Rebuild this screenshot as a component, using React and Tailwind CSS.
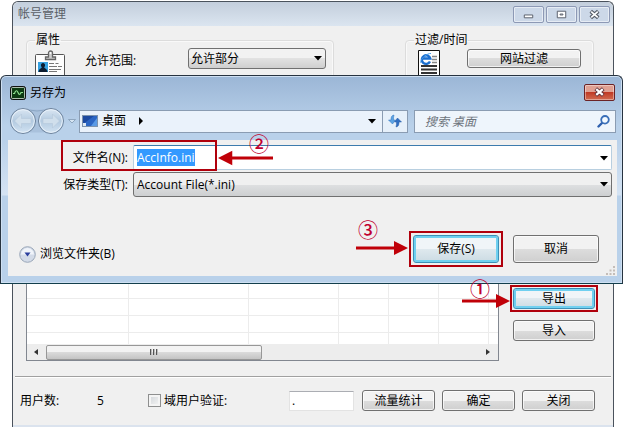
import clsx from 'clsx'

const COLUMNS = ['w-[102px]', 'w-[120px]', 'w-[90px]', 'w-[50px]', 'w-[50px]', 'w-[50px]', '']
const ROWS = 11

const FONT = "font-['Open_Sans','Noto_Sans_CJK_SC',sans-serif]"

function Button({ active, className, children }) {
  return (
    <button
      type="button"
      className={clsx(
        'flex items-center justify-center whitespace-nowrap rounded-[3px] border text-xs leading-4 text-black',
        active
          ? 'border-[#3c8fb5] bg-linear-to-b from-[#f0f5f8] from-50% via-[#dfe9ee] via-50% to-[#cbdbe3] inset-ring-2 inset-ring-[#6fd0f0]'
          : 'border-[#707070] bg-linear-to-b from-[#f2f2f2] from-50% via-[#dddddd] via-50% to-[#cfcfcf] inset-ring inset-ring-white/70',
        className
      )}
    >
      {children}
    </button>
  )
}

function Caret({ className }) {
  return (
    <svg viewBox="0 0 8 5" className={clsx('pointer-events-none h-[5px] w-2', className)} aria-hidden="true">
      <path d="M0 0h8L4 4.6z" fill="#000" />
    </svg>
  )
}

function Arrow({ left, className }) {
  return (
    <svg viewBox="0 0 54 16" className={clsx('pointer-events-none absolute z-20 h-4', className)} preserveAspectRatio={left ? 'xMinYMid slice' : 'xMaxYMid slice'} aria-hidden="true">
      {left ? (
        <path d="M0 8 14 1v5.5h40v3H14V15z" fill="#c00008" />
      ) : (
        <path d="M54 8 40 1v5.5H0v3h40V15z" fill="#c00008" />
      )}
    </svg>
  )
}

function Step({ className, children }) {
  return (
    <span className={clsx("pointer-events-none absolute z-20 font-['Noto_Sans_CJK_SC',sans-serif] text-[20px] leading-5 font-medium text-[#c00030]", className)}>
      {children}
    </span>
  )
}

function Frame({ className }) {
  return <span className={clsx('pointer-events-none absolute z-20 border-2 border-[#b0000c]', className)} />
}

function BadgeIcon() {
  return (
    <svg width="30" height="30" viewBox="0 0 30 30" aria-hidden="true">
      <rect x=".5" y="4.5" width="29" height="25" rx="1" fill="#fdfdfd" stroke="#555" />
      <path d="M10.500 9.500V7h3V3a2 2 0 0 1 4 0v4h3v2.500z" fill="#ccc" stroke="#666" strokeWidth="1.300" />
      <circle cx="15.500" cy="3" r="1" fill="#fff" />
      <rect x="3" y="12" width="10" height="10" fill="#35a0e0" />
      <path d="M8 13a2 2.300 0 0 1 1.200 4.200c.2 1.500 3 1 3.300 4.800h-9c.3-3.800 3.100-3.300 3.300-4.800A2 2.300 0 0 1 8 13z" fill="#0c1c30" />
      <path d="M14 13.500h5m1.500 0h3M14 16.500h8m1 0h4M14 19.500h12M14 21.500h8" stroke="#777" />
    </svg>
  )
}

function PageIcon() {
  return (
    <svg width="22" height="30" viewBox="0 0 22 30" aria-hidden="true">
      <path d="M.5.5h21v29H.5z" fill="#fff" stroke="#111" />
      <path d="M14 6.500h5M14 9.500h5M14 12.500h5" stroke="#888" strokeWidth="1.500" />
      <path d="M3 16h16M3 19.500h16M3 23h16M3 26.500h16" stroke="#333" strokeWidth="2" />
      <path d="M12 11.500a4.300 4.300 0 1 1 .3-3H5" fill="none" stroke="#1b6fd0" strokeWidth="2.400" />
      <path d="M3 13C1 11 8 3 13 3.500" fill="none" stroke="#4aa0ee" />
    </svg>
  )
}

function NavArrows() {
  return (
    <svg width="56" height="28" viewBox="0 0 56 28" aria-hidden="true">
      <defs>
        <linearGradient id="orb" x1="0" y1="0" x2="0" y2="1">
          <stop offset="0" stopColor="#dbe7f3" />
          <stop offset=".5" stopColor="#b3cae0" />
          <stop offset="1" stopColor="#d3e4f3" />
        </linearGradient>
      </defs>
      <path d="M14 2.500h28v23H14z" fill="#a9c1dc" />
      <path d="M16 2.500q12 3 24 0" fill="none" stroke="#8ba6c4" />
      <circle cx="14" cy="14" r="12.500" fill="url(#orb)" stroke="#6c829c" />
      <circle cx="42" cy="14" r="12.500" fill="url(#orb)" stroke="#6c829c" />
      <circle cx="14" cy="14" r="11.300" fill="none" stroke="#e8f1fa" />
      <circle cx="42" cy="14" r="11.300" fill="none" stroke="#e8f1fa" />
      <path d="m5.500 14 7-7v4.500H22v5h-9.500V21z" fill="#d0dfec" stroke="#b5c8da" strokeWidth=".6" />
      <path d="m50.500 14-7-7v4.500H34v5h9.500V21z" fill="#d0dfec" stroke="#b5c8da" strokeWidth=".6" />
    </svg>
  )
}

function ManagerWindow() {
  return (
    <main className="mt-px mr-[9px] ml-3 rounded-t-md border border-b-0 border-[#4a525c] bg-[#f0f0f0]">
      <header className="flex h-6 items-center justify-between rounded-t-md bg-linear-to-b from-[#c3cedc] to-[#dbe5f0] pr-[3px] pl-[5px]">
        <h1 className="text-xs leading-4 text-[#5a5f66]">帐号管理</h1>
        <div className="flex gap-[2px]">
          {[
            ['最小化', <path key="p" d="M10.500 8.500h9v3h-9z" fill="#fff" stroke="#555b66" />],
            ['最大化', <path key="p" d="M10.500 4.500h9v7h-9zM13.500 7.500h3v1h-3z" fill="#fff" stroke="#555b66" />],
            ['关闭窗口', <g key="p"><path d="m11 4.500 8 7m0-7-8 7" stroke="#555b66" strokeWidth="4" /><path d="m11.500 5 7 6m0-6-7 6" stroke="#fff" strokeWidth="1.800" /></g>],
          ].map(([label, shape]) => (
            <button key={label} type="button" aria-label={label} className="h-[17px] w-[31px] rounded-[2px] border border-[#8d99b5] bg-[#ccd8e8] inset-ring inset-ring-white/50">
              <svg viewBox="0 0 30 16" className="h-full w-full" aria-hidden="true">{shape}</svg>
            </button>
          ))}
        </div>
      </header>

      <section className="flex h-[136px] items-start justify-between pt-1 pr-[19px] pl-[13px]">
        <fieldset className="h-[120px] w-[308px] rounded-sm border border-[#dcdcdc] px-2 inset-ring inset-ring-white/60">
          <legend className="px-px text-xs leading-5">属性</legend>
          <div className="flex items-start">
            <BadgeIcon />
            <label htmlFor="scope" className="ml-5 pt-[3px] text-xs leading-4">允许范围:</label>
            <div className="relative -mt-[2px] -mr-px ml-auto w-[138px]">
              <select id="scope" className="block h-[21px] w-full appearance-none rounded-[3px] border border-[#707070] bg-linear-to-b from-[#f2f2f2] from-50% via-[#e2e2e2] via-50% to-[#cfcfcf] pl-[2px] text-xs leading-4">
                <option>允许部分</option>
              </select>
              <Caret className="absolute top-2 right-1" />
            </div>
          </div>
        </fieldset>
        <fieldset className="h-[120px] w-[189px] rounded-sm border border-[#dcdcdc] px-3 inset-ring inset-ring-white/60">
          <legend className="-ml-1 px-px text-xs leading-5">过滤/时间</legend>
          <div className="flex items-start justify-between">
            <PageIcon />
            <Button className="-mt-px h-[19px] w-[114px]">网站过滤</Button>
          </div>
        </fieldset>
      </section>

      <section className="flex gap-[14px] pr-[18px] pl-[13px]">
        <div className="flex h-[199px] flex-1 flex-col border border-[#828790] bg-white">
          <div className="flex-1 overflow-hidden">
            <table className="w-full table-fixed border-separate border-spacing-0">
              <colgroup>
                {COLUMNS.map((w, i) => <col key={i} className={w} />)}
              </colgroup>
              <tbody>
                {Array.from({ length: ROWS }, (_, r) => (
                  <tr key={r} className="h-[17px]">
                    {COLUMNS.map((_, c) => (
                      <td key={c} className={clsx('border-b border-[#ececec] p-0', c < COLUMNS.length - 1 && 'border-r')} />
                    ))}
                  </tr>
                ))}
              </tbody>
            </table>
          </div>
          <div className="flex h-4 items-center bg-[#ededed]">
            <svg viewBox="0 0 4 6" className="mx-[7px] h-[6px] w-1" aria-hidden="true"><path d="M4 0v6L0 3z" fill="#333" /></svg>
            <div className="ml-px flex h-[15px] w-[216px] items-center justify-center gap-px rounded-[2px] border border-[#979797] bg-linear-to-b from-[#f3f3f3] from-50% via-[#dadada] via-50% to-[#c4c4c4]">
              {[0, 1, 2].map(i => <span key={i} className="h-[6px] w-[2px] border-l border-[#555] bg-[#bbb]" />)}
            </div>
            <svg viewBox="0 0 4 6" className="mr-2 ml-auto h-[6px] w-1" aria-hidden="true"><path d="M0 0v6l4-3z" fill="#333" /></svg>
          </div>
        </div>
        <div className="flex w-[82px] flex-col gap-[11px] pt-[126px]">
          <div className="relative">
            <Button active className="h-[21px] w-full">导出</Button>
            <Frame className="-inset-[3px]" />
            <Arrow className="top-[5px] right-[3px] mr-[82px] w-[48px]" />
            <Step className="-top-[9px] -left-[43px]">①</Step>
          </div>
          <Button className="h-[21px] w-full">导入</Button>
        </div>
      </section>

      <footer className="mx-[2px] mt-[15px] border-t border-[#a0a0a0] pb-[14px]">
        <div className="flex items-center border-t border-white pt-3 pr-4 pl-[5px] text-xs leading-4">
          <span className="w-[77px]">用户数:</span>
          <span className="w-[51px]">5</span>
          <input id="domain" type="checkbox" className="h-[13px] w-[13px] appearance-none border border-[#8e8f8f] bg-linear-to-br from-[#d0d4d8] to-[#f6f6f6] inset-ring-2 inset-ring-[#f4f4f4]" />
          <label htmlFor="domain" className="ml-[3px]">域用户验证:</label>
          <input aria-label="域" defaultValue="." className="ml-auto h-5 w-[65px] border border-[#e3e3e3] border-t-[#abadb3] bg-white px-[2px] outline-none" />
          <div className="ml-2 flex gap-[7px]">
            <Button className="h-[21px] w-[73px]">流量统计</Button>
            <Button className="h-[21px] w-[73px]">确定</Button>
            <Button className="h-[21px] w-[73px]">关闭</Button>
          </div>
        </div>
      </footer>
      <div className="h-[2px] bg-[#dbe3ee]" />
    </main>
  )
}

function SaveDialog() {
  return (
    <div role="dialog" aria-labelledby="save-title" className="absolute inset-x-0 top-[75px] z-10 rounded-t-md border border-[#273340] border-b-[#123e4c] bg-[linear-gradient(#9bb6d6,#b9d1ea_50px,#b9d1ea_64px,#d5e3f3_119px,#b9d1ea_120px)] pr-[5px] pb-[7px] pl-[7px] inset-ring inset-ring-[#cfe0f2]">
      <header className="flex h-[33px] items-center pl-[2px] text-xs">
        <svg width="16" height="14" viewBox="0 0 16 14" aria-hidden="true">
          <rect x=".5" y=".5" width="15" height="13" rx="2" fill="#0b1a0c" stroke="#111" />
          <rect x="1.500" y="1.500" width="13" height="11" rx="1" fill="#0d3a12" stroke="#d5e5d5" strokeWidth=".8" />
          <path d="M3 7.500h1.500C5.500 4 7 4 8 6.500s2 2.500 3 0h2" fill="none" stroke="#8ee08e" strokeWidth="1.200" />
        </svg>
        <h2 id="save-title" className="ml-1 pt-px leading-4">另存为</h2>
        <button type="button" aria-label="关闭" className="mr-[2px] ml-auto h-[17px] w-[31px] rounded-[2px] border border-[#6b2326] bg-linear-to-b from-[#e0a193] from-50% via-[#c03a25] via-50% to-[#d06a50] inset-ring inset-ring-white/40">
          <svg viewBox="0 0 30 16" className="h-full w-full" aria-hidden="true">
            <path d="m11 4 8 7m0-7-8 7" stroke="#5c3038" strokeWidth="4.200" />
            <path d="m11.500 4.500 7 6m0-6-7 6" stroke="#fff" strokeWidth="2.400" />
          </svg>
        </button>
      </header>

      <nav className="flex h-[24px] items-center pl-px text-xs">
        <NavArrows />
        <svg width="8" height="5" viewBox="0 0 8 5" className="mr-[3px] ml-[3px]" aria-hidden="true"><path d="M.5.5h7L4 4z" fill="#d6e5f3" stroke="#8299b3" strokeWidth=".8" /></svg>
        <div className="flex h-[23px] flex-1 items-center border border-[#8a9cb2] bg-[#eaf2fb] pl-[2px]">
          <svg width="16" height="12" viewBox="0 0 16 12" aria-hidden="true">
            <rect x=".5" y=".5" width="15" height="11" fill="#2c66c4" stroke="#7d93ad" />
            <path d="M1 1h11L1 9z" fill="#1d4aa0" />
            <path d="M9 11 15 3v8z" fill="#5a9ae6" />
            <path d="M1 8h3v3H1z" fill="#dfeaf5" />
          </svg>
          <span className="ml-1 leading-4">桌面</span>
          <svg width="4" height="8" viewBox="0 0 4 8" className="ml-[13px]" aria-hidden="true"><path d="M0 0v8l4-4z" fill="#000" /></svg>
          <Caret className="mr-[6px] ml-auto" />
        </div>
        <button type="button" aria-label="刷新" className="-ml-px flex h-[23px] w-[26px] items-center justify-center border border-[#8a9cb2] bg-[#e6f0fa]">
          <svg width="14" height="14" viewBox="0 0 14 14" aria-hidden="true">
            <path d="M6 1C3.500 1.500 3 3 3 6H.5l4 4 3-4H5.500C5.500 4 5.500 2.500 6 1z" fill="#5ba3e4" stroke="#2d72bd" strokeWidth=".5" />
            <path d="M8 13c2.500-.5 3-2 3-5h2.500l-4-4-3 4H8.500c0 2 0 3.500-.5 5z" fill="#2f6fc2" stroke="#2459a5" strokeWidth=".5" />
          </svg>
        </button>
        <div className="relative mr-px ml-[6px] w-[202px]">
          <input type="search" aria-label="搜索 桌面" placeholder="搜索 桌面" className="h-[23px] w-full border border-[#8a9cb2] bg-[#eef5fc] pr-6 pl-[10px] italic outline-none placeholder:text-[#6d747c]" />
          <svg width="13" height="13" viewBox="0 0 13 13" className="pointer-events-none absolute top-[5px] right-[6px]" aria-hidden="true">
            <path d="m1.500 11.500 4-4" stroke="#2d5fae" strokeWidth="2.400" strokeLinecap="round" />
            <circle cx="8" cy="4.800" r="3.800" fill="#f4faff" stroke="#3a6fb8" strokeWidth="1.800" />
          </svg>
        </div>
      </nav>

      <form className="relative mt-[7px] h-[136px] bg-[#f0f0f0] pt-[5px] pr-[5px] text-xs" onSubmit={e => e.preventDefault()}>
        <div className="relative flex items-center">
          <label htmlFor="name" className="w-[125px] pr-[5px] text-right leading-4">文件名(N):</label>
          <div className="relative flex-1">
            <input
              id="name"
              autoFocus
              onFocus={e => e.target.select()}
              defaultValue="AccInfo.ini"
              className="block h-[25px] w-full rounded-[2px] border border-[#b8cfe0] border-t-[#3d7bad] bg-white pr-5 pl-[3px] outline-none selection:bg-[#3399ff] selection:text-white"
            />
            <Caret className="absolute top-[11px] right-1" />
          </div>
          <Frame className="-top-[5px] -bottom-px left-[53px] w-[156px]" />
          <Arrow left className="top-[5px] left-[210px] w-[55px]" />
          <Step className="-top-[11px] left-[241px]">②</Step>
        </div>
        <div className="mt-[2px] flex items-center">
          <label htmlFor="type" className="w-[125px] pr-[5px] text-right leading-4">保存类型(T):</label>
          <div className="relative flex-1">
            <select id="type" className="block h-[25px] w-full appearance-none rounded-[3px] border border-[#707070] bg-linear-to-b from-[#f0f0f0] from-50% via-[#dfe0e1] via-50% to-[#cdcfd1] pl-[3px]">
              <option>Account File(*.ini)</option>
            </select>
            <Caret className="absolute top-[10px] right-1" />
          </div>
        </div>
        <div className="mt-[38px] flex items-center pr-[13px]">
          <button type="button" className="mt-[10px] ml-[11px] flex items-center gap-1 leading-4">
            <svg width="17" height="17" viewBox="0 0 17 17" aria-hidden="true">
              <circle cx="8.500" cy="8.500" r="7.800" fill="#d3dbe8" stroke="#9aa7b8" />
              <path d="M2 8.500a6.500 6.500 0 0 1 13 0z" fill="#f0f4fa" />
              <path d="M5.500 6.500h6l-3 4z" fill="#2b3f9e" />
            </svg>
            浏览文件夹(B)
          </button>
          <div className="ml-auto flex gap-[14px]">
            <div className="relative">
              <Button active className="h-7 w-[86px]">保存(S)</Button>
              <Frame className="-inset-[4px]" />
              <Arrow className="top-[5px] right-[91px] w-[52px]" />
              <Step className="-top-[15px] -left-[55px]">③</Step>
            </div>
            <Button className="h-7 w-[86px]">取消</Button>
          </div>
        </div>
        <svg width="9" height="9" viewBox="0 0 9 9" className="absolute right-[2px] bottom-[1px]" aria-hidden="true">
          <path d="M7 0h2v2H7zM7 3.500h2v2H7zM7 7h2v2H7zM3.500 3.500h2v2h-2zM3.500 7h2v2h-2zM0 7h2v2H0z" fill="#c4bdb8" />
        </svg>
      </form>
    </div>
  )
}

export default function App() {
  return (
    <div className={clsx('relative min-h-screen overflow-hidden bg-white text-black', FONT)}>
      <ManagerWindow />
      <SaveDialog />
    </div>
  )
}
